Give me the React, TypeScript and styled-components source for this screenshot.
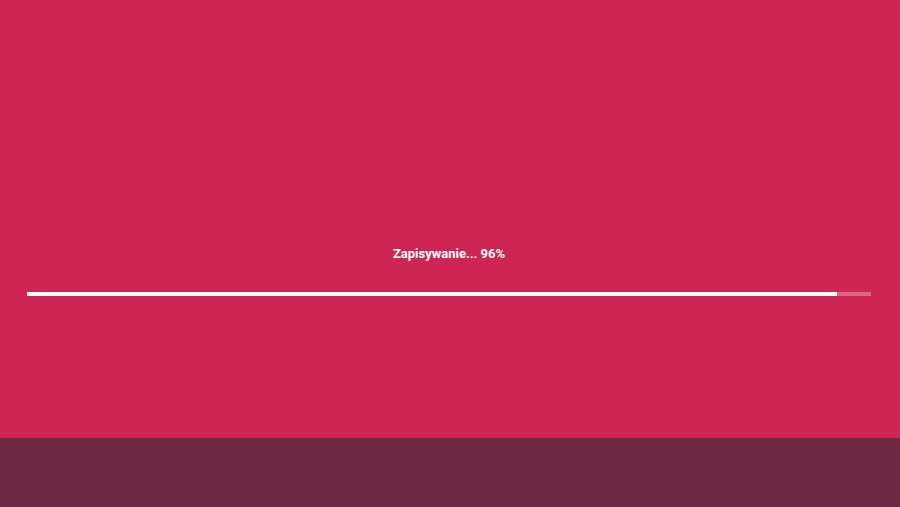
import { createGlobalStyle } from "styled-components";
import styled from "styled-components";

const progress = 96;

export default function App() {
  return (
    <>
      <GlobalStyle />
      <Page>
        <Stage>
          <Status>Zapisywanie... {progress}%</Status>
          <Track>
            <Fill style={{ width: `${progress}%` }} />
          </Track>
        </Stage>
        <Footer />
      </Page>
    </>
  );
}

const GlobalStyle = createGlobalStyle`
  html, body {
    margin: 0;
    padding: 0;
    background: #cf2554;
    font-family: Roboto, "Liberation Sans", sans-serif;
  }
`;

const Page = styled.div`
  display: flex;
  flex-direction: column;
  height: 507px;
`;

const Stage = styled.div`
  height: 438px;
  box-sizing: border-box;
  padding: 246px 29px 0 27px;
  background: #cf2554;
  display: flex;
  flex-direction: column;
  align-items: center;
`;

const Status = styled.div`
  color: #fff;
  font-size: 13px;
  font-weight: 700;
  line-height: 15px;
`;

const Track = styled.div`
  width: 100%;
  height: 4px;
  margin-top: 31px;
  background: rgba(255, 255, 255, 0.3);
`;

const Fill = styled.div`
  height: 100%;
  background: #fff;
`;

const Footer = styled.div`
  flex: 1;
  background: #6c2b43;
`;
